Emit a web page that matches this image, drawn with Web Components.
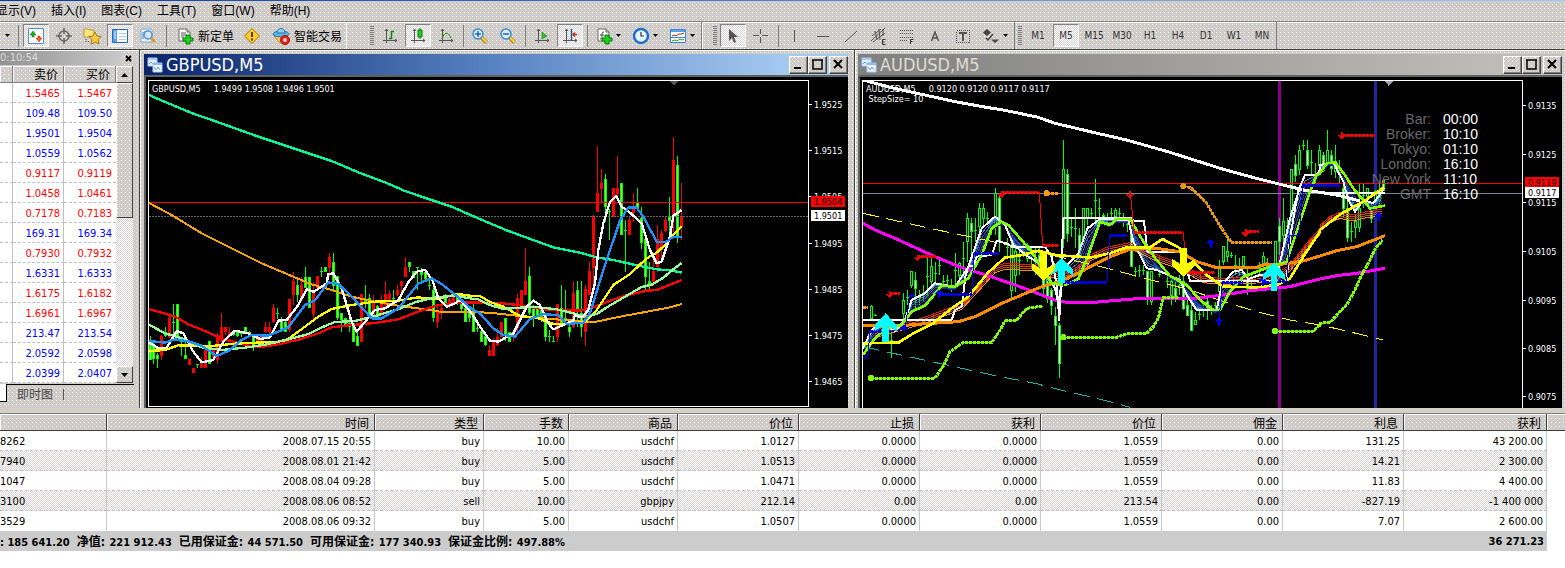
<!DOCTYPE html>
<html lang="zh-CN">
<head>
<meta charset="utf-8">
<title>交易终端</title>
<style>
  html, body { margin: 0; background: #fff; }
  body {
    --face: #d2cec8;
    --ui: "DejaVu Sans Condensed", "Noto Sans", "Noto Sans CJK SC", sans-serif;
    --grain: url("data:image/svg+xml,%3Csvg xmlns='http://www.w3.org/2000/svg' width='4' height='4' shape-rendering='crispEdges'%3E%3Crect width='4' height='4' fill='%23cccccc'/%3E%3Crect width='1' height='1' fill='%23ffffcc'/%3E%3Crect x='2' y='2' width='1' height='1' fill='%23ffcccc'/%3E%3C/svg%3E");
    --check: url("data:image/svg+xml,%3Csvg xmlns='http://www.w3.org/2000/svg' width='2' height='2' shape-rendering='crispEdges'%3E%3Crect width='1' height='1' fill='%23d8d4d4'/%3E%3Crect x='1' y='1' width='1' height='1' fill='%23d8d4d4'/%3E%3C/svg%3E");
    font: 11px/14px var(--ui);
    color: #000;
    overflow-x: hidden;
  }
</style>
</head>
<body>
<trade-terminal></trade-terminal>

<template id="terminal">
  <style>
    :host { display: block; background: var(--face) var(--grain); overflow: hidden; }
    .strip { height: 1px; background: linear-gradient(90deg, #0a3a9a, #5580c8 50%, #a6caf0); }
    .bars { display: flex; height: 27px; border-top: 1px solid #808080; border-bottom: 1px solid #404040; box-shadow: inset 0 1px #fff; }
    main { display: flex; padding-bottom: 5px; border-bottom: 1px solid #808080; box-shadow: inset 0 -5px #d4d0c8, inset 0 1px #fff; }
    .spacer { width: 20px; border-left: 1px solid #fff; }
    .gap { width: 7px; border-left: 1px solid #fff; }
  </style>
  <div class="strip"></div>
  <menu-bar></menu-bar>
  <div class="bars">
    <tool-group first>
      <tool-button kind="caret" label="窗口列表"></tool-button><tool-sep wide></tool-sep>
      <tool-button pressed icon="quotes" label="市场报价"></tool-button>
      <tool-button icon="target" label="数据窗口"></tool-button>
      <tool-button icon="nav" label="导航"></tool-button>
      <tool-button pressed icon="term" label="终端"></tool-button>
      <tool-button icon="test" label="策略测试"></tool-button>
      <tool-sep wide></tool-sep>
      <tool-button kind="text" icon="order">新定单</tool-button>
      <tool-button icon="warn" label="编辑器"></tool-button>
      <tool-button kind="text" icon="expert">智能交易</tool-button>
    </tool-group>
    <div class="spacer"></div>
    <tool-group>
      <tool-button icon="bars" label="柱状图"></tool-button>
      <tool-button pressed icon="candle" label="蜡烛图"></tool-button>
      <tool-button icon="line" label="折线图"></tool-button>
      <tool-sep></tool-sep>
      <tool-button icon="zoomin" label="放大"></tool-button>
      <tool-button icon="zoomout" label="缩小"></tool-button>
      <tool-sep></tool-sep>
      <tool-button icon="scroll" label="自动滚动"></tool-button>
      <tool-button pressed icon="shift" label="图表平移"></tool-button>
      <tool-sep></tool-sep>
      <tool-button kind="drop" icon="docplus" label="技术指标"></tool-button>
      <tool-button kind="drop" icon="clock" label="时段"></tool-button>
      <tool-button kind="drop" icon="tmpl" label="模板"></tool-button>
    </tool-group>
    <div class="gap"></div>
    <tool-group>
      <tool-button pressed icon="cursor" label="光标"></tool-button>
      <tool-button icon="cross" label="十字准线"></tool-button>
      <tool-sep></tool-sep>
      <tool-button icon="vline" label="垂直线"></tool-button>
      <tool-button icon="hline" label="水平线"></tool-button>
      <tool-button icon="trend" label="趋势线"></tool-button>
      <tool-button icon="chan" label="等距通道"></tool-button>
      <tool-button icon="fibo" label="斐波纳契"></tool-button>
      <tool-button icon="text" label="文字"></tool-button>
      <tool-button icon="label" label="文字标签"></tool-button>
      <tool-button kind="drop" icon="arrows" label="箭头"></tool-button>
    </tool-group>
    <tool-group>
      <tool-button kind="period">M1</tool-button><tool-button kind="period" pressed>M5</tool-button><tool-button kind="period">M15</tool-button><tool-button kind="period">M30</tool-button><tool-button kind="period">H1</tool-button><tool-button kind="period">H4</tool-button><tool-button kind="period">D1</tool-button><tool-button kind="period">W1</tool-button><tool-button kind="period">MN</tool-button>
    </tool-group>
  </div>
  <main>
    <market-watch></market-watch>
    <chart-window caption="GBPUSD,M5" active><gbp-chart></gbp-chart></chart-window>
    <chart-window caption="AUDUSD,M5"><aud-chart></aud-chart></chart-window>
  </main>
  <trade-table></trade-table>
</template>

<template id="menu">
  <style>
    :host { display: block; height: 20px; }
    nav { display: flex; gap: 15px; margin-left: -4px; }
    a { color: #000; text-decoration: none; font: 12px/20px "Liberation Sans", "Noto Sans CJK SC", sans-serif; white-space: nowrap; }
  </style>
  <nav><a href="#view">显示(V)</a><a href="#insert">插入(I)</a><a href="#charts">图表(C)</a><a href="#tools">工具(T)</a><a href="#window">窗口(W)</a><a href="#help">帮助(H)</a></nav>
</template>

<template id="group">
  <style>
    :host { display: flex; align-items: center; height: 27px; border-right: 1px solid #808080; }
    .grip { width: 4px; height: 20px; margin: 0 2px 0 3px; background: repeating-linear-gradient(#808080 0 1px, transparent 1px 2px); }
    :host([first]) { border: 0; }
    :host([first]) .grip { display: none; }
  </style>
  <div class="grip"></div><slot></slot>
</template>

<template id="button">
  <style>
    :host { display: block; width: 28px; flex: none; }
    :host([kind="caret"]) { width: 14px; }
    :host([kind="text"]) { width: auto; }
    :host([kind="drop"]) { width: 37px; }
    button { display: flex; align-items: center; justify-content: center; box-sizing: border-box; width: 26px; height: 23px; margin: 0 1px; padding: 0; border: 1px solid transparent; background: none; color: #333; font: 11px/14px var(--ui); white-space: nowrap; }
    :host([kind="caret"]) button { width: 12px; }
    :host([kind="period"]) button { font-size: 10px; }
    :host([kind="text"]) button { width: auto; margin: 0; padding: 0 3px 0 6px; gap: 5px; color: #000; font: 12px/14px "Noto Sans CJK SC", sans-serif; }
    :host([kind="drop"]) button { width: 35px; gap: 4px; justify-content: flex-start; padding-left: 4px; }
    :host([pressed]) button { border-color: #808080 #fff #fff #808080; background: #fff var(--check); }
    svg { display: block; flex: none; overflow: visible; }
  </style>
  <button type="button"><slot></slot></button>
</template>

<template id="sep">
  <style>
    :host { display: block; flex: none; box-sizing: border-box; width: 6px; height: 22px; border-left: 3px solid transparent; background: linear-gradient(90deg, #808080 1px, transparent 1px) no-repeat padding-box; }
    :host([wide]) { width: 8px; border-left-width: 4px; }
  </style>
</template>

<template id="market">
  <style>
    :host { display: block; width: 139px; flex: none; }
    .title { display: flex; justify-content: space-between; align-items: center; height: 16px; padding-right: 6px; font-size: 11px; line-height: 14px; color: #ddd; }
    .title span { flex: 1; background: linear-gradient(90deg, #929292, #b8b8b8 70%, #c8c8c8); margin-right: 2px; }
    .title button { width: 10px; height: 12px; padding: 0; border: 0; background: none; display: grid; place-items: center; }
    .body { display: flex; width: 133px; }
    table { width: 116px; table-layout: fixed; border-collapse: separate; border-spacing: 0; background: #fff; }
    td, th { box-sizing: border-box; padding: 2px 3px 0 0; height: 20px; text-align: right; font-weight: normal; border-right: 1px solid #c0c0c0; border-bottom: 1px dashed #c0c0c0; white-space: nowrap; font-size: 11px; line-height: 14px; }
    td:last-child { border-right: 0; padding-right: 4px; }
    th { height: 17px; padding: 0 5px 0 0; font: 12px/14px "Noto Sans CJK SC", sans-serif; background: var(--face) var(--grain); border-bottom: 1px solid #808080; border-right: 1px solid #808080; box-shadow: inset 1px 1px #fff; }
    .down { color: #f00; } .up { color: #00f; }
    .scroll { width: 17px; display: flex; flex-direction: column; background: #fff var(--check); }
    .scroll button, .thumb { box-sizing: border-box; width: 17px; height: 17px; padding: 0; display: grid; place-items: center; background: var(--face) var(--grain); border: 1px solid; border-color: #fff #404040 #404040 #fff; }
    .thumb { height: 135px; } .rest { flex: 1; }
    .tabs { display: flex; height: 17px; margin-top: 1px; border-top: 1px solid #000; font: 12px/17px "Noto Sans CJK SC", sans-serif; width: 134px; }
    .tabs i { width: 6px; background: #fff; border: 1px solid #000; border-width: 0 1px 1px 0; margin-top: -1px; }
    .tabs a { color: #444; text-decoration: none; padding: 0 10px; }
    .tabs b { width: 1px; margin: 4px 0 2px; background: #555; }
  </style>
  <div class="title"><span>0:10:54</span><button type="button" aria-label="关闭"><svg width="7" height="7"><path d="M1 1l5 5M6 1l-5 5" stroke="#000" stroke-width="2"/></svg></button></div>
  <div class="body">
    <table><colgroup><col style="width:13px"><col style="width:51px"><col></colgroup><thead><tr><th></th><th>卖价</th><th>买价</th></tr></thead><tbody></tbody></table>
    <div class="scroll"><button type="button" aria-label="向上"><svg width="7" height="4"><path d="M0 4h7L3.500 0z"/></svg></button><div class="thumb"></div><div class="rest"></div><button type="button" aria-label="向下"><svg width="7" height="4"><path d="M0 0h7L3.500 4z"/></svg></button></div>
  </div>
  <div class="tabs"><i></i><a href="#tick">即时图</a><b></b></div>
</template>

<template id="window">
  <style>
    :host { display: block; flex: 1 1 0; min-width: 0; padding: 4px 3px 0; border-left: 1px solid #404040; box-shadow: inset 1px 1px #fff; }
    :host([active]) { padding: 4px 6px 0 4px; }
    header { display: flex; align-items: center; height: 21px; color: #e0dcd4; background: linear-gradient(90deg, #808080, #c4c2be); }
    :host([active]) header { color: #fff; background: linear-gradient(90deg, #0a246a, #5580c0 48%, #a6caf0 92%); }
    header > svg { margin: 0 3px 0 3px; flex: none; }
    h2 { flex: 1; margin: 0; font: 18px/21px var(--ui); white-space: nowrap; }
    button { box-sizing: border-box; width: 19px; height: 18px; padding: 0; display: grid; place-items: center; background: var(--face) var(--grain); border: 1px solid; border-color: #fff #404040 #404040 #fff; box-shadow: inset -1px -1px #808080; }
    button:last-child { margin-left: 2px; }
    .view { border: 2px solid #606060; border-width: 2px 0 0 2px; background: #000; padding: 3px 0 0 2px; }
  </style>
  <header>
    <svg width="16" height="16" viewBox="0 0 16 16"><path d="M1 1h9v8H1z" fill="#e4efff" stroke="#a8ccf8"/><path d="M1 1h9v2H1z" fill="#a8ccf8"/><path d="M2 7l2-2 2 2 2-2" stroke="#6a9ce4" fill="none"/><path d="M6 6h9v9H6z" fill="#f2f8ff" stroke="#a8ccf8"/><path d="M6 6h9v2H6z" fill="#8fbcf4"/><path d="M7 10l2 3 2-3 2 3" stroke="#6a9ce4" fill="none"/></svg>
    <h2></h2>
    <button type="button" aria-label="最小化"><svg width="11" height="11"><path d="M1 8h7v2H1z"/></svg></button><button type="button" aria-label="最大化"><svg width="11" height="11"><path d="M1 1h9v9H1zM0 1h11" fill="none" stroke="#000" stroke-width="1.500"/></svg></button><button type="button" aria-label="关闭"><svg width="11" height="11"><path d="M1 1l8 8M9 1l-8 8" stroke="#000" stroke-width="2"/></svg></button>
  </header>
  <div class="view"><slot></slot></div>
</template>

<template id="chart">
  <style>
    :host { display: block; font-size: 9px; line-height: 10px; color: #fff; }
    .row { display: flex; padding-bottom: 1px; }
    :host([open]) .row { padding: 0; }
    .plot { position: relative; flex: 1; min-width: 0; height: 325px; border: 1px solid #fff; }
    :host([open]) .plot { height: 327px; border-bottom: 0; }
    svg { display: block; }
    .plot > svg { width: 100%; height: 100%; }
    .axis { width: 39px; flex: none; }
    .axis text { font: 9px var(--ui); fill: #fff; }
    .info { position: absolute; left: 3px; top: 3px; white-space: pre; }
    .info b { font-weight: normal; margin-right: 13px; }
    .clock { position: absolute; right: 45px; top: 31px; display: grid; grid-template-columns: auto 34px; column-gap: 12px; font: 14px/15px "Liberation Sans", sans-serif; text-align: right; }
    .clock span:nth-child(odd) { color: #696969; }
  </style>
  <div class="row"><div class="plot"></div><svg class="axis"></svg></div>
</template>

<template id="trades">
  <style>
    :host { display: block; background: #fff; padding-bottom: 17px; }
    table { width: 100%; table-layout: fixed; border-collapse: separate; border-spacing: 0; }
    td, th { box-sizing: border-box; height: 20px; padding: 2px 3px 0 0; text-align: right; font-weight: normal; font-size: 11px; line-height: 14px; border-right: 1px solid #c8c8c8; border-bottom: 1px dashed #c0c0c0; white-space: nowrap; overflow: hidden; }
    td:first-child { text-align: left; }
    th { height: 17px; padding: 0 5px 0 0; font: 12px/15px "Noto Sans CJK SC", sans-serif; background: var(--face) var(--grain); border-right: 1px solid #404040; border-bottom: 1px solid #404040; box-shadow: inset 1px 1px #fff; }
    th:last-child { border-right: 0; }
    td:last-child { border: 0; background: #fff; }
    tbody tr:nth-child(even) { background: var(--check); }
    tbody tr:last-child td { border-bottom: 0; }
    tfoot td { border: 0; background: #ccc; font-weight: bold; white-space: pre; }
    tfoot td:last-child { background: #fff; }
    tfoot span { font-size: 12px; margin: 0 1px 0 7px; }
  </style>
  <table>
    <colgroup><col style="width:107px"><col><col style="width:109px"><col style="width:85px"><col style="width:109px"><col style="width:121px"><col style="width:121px"><col style="width:121px"><col style="width:121px"><col style="width:121px"><col style="width:121px"><col style="width:143px"><col style="width:18px"></colgroup>
    <thead><tr><th></th><th>时间</th><th>类型</th><th>手数</th><th>商品</th><th>价位</th><th>止损</th><th>获利</th><th>价位</th><th>佣金</th><th>利息</th><th>获利</th><th></th></tr></thead>
    <tbody></tbody>
    <tfoot><tr><td colspan="11">: 185 641.20<span>净值:</span> 221 912.43<span>已用保证金:</span> 44 571.50<span>可用保证金:</span> 177 340.93<span>保证金比例:</span> 497.88%</td><td>36 271.23</td><td></td></tr></tfoot>
  </table>
</template>

<script>
const stamp = (host, id) => {
  const root = host.attachShadow({ mode: 'open' });
  root.append(document.getElementById(id).content.cloneNode(true));
  return root;
};
const simple = (name, id) => customElements.define(name, class extends HTMLElement {
  constructor() { super(); stamp(this, id); }
});

/* ---- toolbar icons, all on a 16 x 16 grid ---- */
const axes = '<path d="M4.500 1v14M1 12.500h14M3 3l1.500-2L6 3M13 11l2 1.500-2 1.500" fill="none" stroke="#555"/>';
const lens = s => `<path d="M9.500 9.500l5 5" stroke="#b88a20" stroke-width="4"/><path d="M9.500 9l5 5" stroke="#ffd54a" stroke-width="2"/><circle cx="6" cy="6" r="5" fill="#d8f0ff" stroke="#3f86d0" stroke-width="1.500"/>${s}`;
const sheet = '<path d="M2 1h8l3 3v9H2z" fill="#fff" stroke="#666"/><path d="M10 1v3h3" fill="#ccc" stroke="#666"/>';
const plus = '<path d="M9 7h4v3h3v3h-3v3H9v-3H6v-3h3z" fill="#1fd01f" stroke="#087a08"/>';
const ICONS = {
  quotes: '<path d="M0.500 0.500h15v15H.5z" fill="#fff" stroke="#4a90e0"/><path d="M5 3l3 4H6v2H4V7H2z" fill="#18b018" stroke="#0a700a" stroke-width=".5"/><path d="M11 14L8 10h2V8h2v2h2z" fill="#f06030" stroke="#b02000" stroke-width=".5"/>',
  target: '<circle cx="8" cy="8" r="5" fill="none" stroke="#666" stroke-width="1.500"/><path d="M8 0v6M8 10v6M0 8h6M10 8h6" stroke="#666" stroke-width="1.500"/>',
  nav: '<path d="M0 1h4l1 1h5v7H0z" fill="#ffe680" stroke="#c89a28"/><path d="M2 11v1M2 13v1M4 13.500h1" stroke="#444"/><path d="M11 4l2 4 4 .5-3 3 1 4.500-4-2-4 2 1-4.500-3-3 4-.5z" fill="#ffcf3a" stroke="#a87412"/>',
  term: '<path d="M.5 1.500h15v13H.5z" fill="#fff" stroke="#2468b8"/><path d="M1 2h4v12H1z" fill="#5aa0e8"/><path d="M2 4h2M2 6h2M2 8h2M2 10h2" stroke="#d8ecff"/><path d="M7 5.500h7M7 8.500h7M7 11.500h7" stroke="#b0c8e8"/>',
  test: '<path d="M1 1h11v13H1z" fill="#e8f2fc" stroke="#8aa8c8"/><path d="M3 4v7M5 3v5M7 6v5" stroke="#4080c0"/><path d="M11 10l4 4" stroke="#d8a030" stroke-width="3"/><circle cx="8" cy="7" r="4" fill="#cfe8ff" fill-opacity=".8" stroke="#4f8fd0" stroke-width="1.500"/>',
  order: sheet + '<path d="M4 5h5M4 7h6M4 9h3" stroke="#555"/>' + plus,
  warn: '<path d="M8 .5L15.500 8 8 15.500.5 8z" fill="#ffcc28" stroke="#a87800"/><path d="M8 4v5M8 10.500v2" stroke="#553c00" stroke-width="2"/>',
  expert: '<path d="M1 8l6 7h5l3-6z" fill="#f8d060" stroke="#c08820"/><ellipse cx="8" cy="6" rx="8" ry="3" fill="#5fb4e8" stroke="#2878b0"/><path d="M4 5c0-6 8-6 8 0z" fill="#8fd0f4" stroke="#2878b0"/><circle cx="12" cy="12" r="4.500" fill="#e02818" stroke="#a01008"/><path d="M10.500 10.500h3v3h-3z" fill="#fff"/>',
  bars: axes + '<path d="M7 10.500h2.500V3.500H12" fill="none" stroke="#0a8a0a" stroke-width="1.500"/>',
  candle: axes + '<path d="M10 0v11" stroke="#087a08"/><path d="M8 2h4v7H8z" fill="#20d020" stroke="#087a08"/>',
  line: axes + '<path d="M4 11c2-7 6-8 9-1" fill="none" stroke="#0a9a0a"/>',
  zoomin: lens('<path d="M3 6h6M6 3v6" stroke="#2060b0" stroke-width="1.500"/>'),
  zoomout: lens('<path d="M3 6h6" stroke="#2060b0" stroke-width="1.500"/>'),
  scroll: axes + '<path d="M8 4l5 4-5 3z" fill="#30c030" stroke="#087a08" stroke-width=".5"/>',
  shift: axes + '<path d="M9.500 1v11" stroke="#1060b0" stroke-width="1.500"/><path d="M15 6.500h-4M13 4.500l-2 2 2 2" fill="none" stroke="#c03818" stroke-width="1.500"/>',
  docplus: sheet + '<path d="M8 4c-2 0-2 1-2 3s0 4-2 4M4 7h4" fill="none" stroke="#444"/>' + plus,
  clock: '<circle cx="8" cy="8" r="7" fill="#e8f4ff" stroke="#1e6fd0" stroke-width="2.500"/><path d="M8 4v4h3" fill="none" stroke="#333" stroke-width="1.200"/>',
  tmpl: '<path d="M.5 1.500h15v13H.5z" fill="#fff" stroke="#3f86d8"/><path d="M1 2h14v2H1z" fill="#5aa0e8"/><path d="M2 8l2-1 2 1 3-2 2 0 3-1" fill="none" stroke="#b02818"/><path d="M1 9.500h14" stroke="#3f86d8"/><path d="M2 13l3-1 2 1 3-2 2 1 2-1" fill="none" stroke="#18a018"/>',
  cursor: '<path d="M4 1v12l3-3 2 5 2-1-2-5h4z" fill="#555"/>',
  cross: '<path d="M7.500 1v5M7.500 9v6M0 7.500h6M9 7.500h6" stroke="#555"/>',
  vline: '<path d="M7.500 2v12" stroke="#555"/>',
  hline: '<path d="M2 8.500h12" stroke="#555"/>',
  trend: '<path d="M2 14L14 3" stroke="#555"/>',
  chan: '<path d="M0 13L14 0M1 8l9-7M2 14L14 5M4 3l2 9M8 1l1 11M12 1l0 7" stroke="#555"/><path d="M14.500 11.500h-3v5h3M11.500 14h2" fill="none" stroke="#333"/>',
  fibo: '<path d="M1 2.500h14M1 5.500h14M1 9.500h14M1 12.500h8" stroke="#555" stroke-dasharray="1 1"/><path d="M11.500 16v-4.500h3M11.500 13.500h2" fill="none" stroke="#333"/>',
  text: '<path d="M4.500 13L8 4l3.500 9M5.500 10h5" fill="none" stroke="#555" stroke-width="1.500"/>',
  label: '<path d="M1.500 2.500h13v12h-13z" fill="none" stroke="#555" stroke-dasharray="1 1" shape-rendering="crispEdges"/><path d="M4 5h8M8 5v8" stroke="#555" stroke-width="2"/>',
  arrows: '<path d="M4 1l4 3.500-4 3.500L0 4.500zM12 15l-4-3.500h8z" fill="#444"/><path d="M3 10l2 2 5-6" fill="none" stroke="#444" stroke-width="1.500"/>'
};
const caret = '<svg width="5" height="3"><path d="M0 0h5L2.500 3z"/></svg>';

customElements.define('tool-button', class extends HTMLElement {
  constructor() { super(); stamp(this, 'button'); }
  connectedCallback() {
    const b = this.shadowRoot.querySelector('button');
    const icon = this.getAttribute('icon'), kind = this.getAttribute('kind');
    if (this.hasAttribute('label')) b.setAttribute('aria-label', this.getAttribute('label'));
    if (icon) b.insertAdjacentHTML('afterbegin', `<svg width="16" height="16" viewBox="0 0 16 16">${ICONS[icon]}</svg>`);
    if (kind === 'caret' || kind === 'drop') b.insertAdjacentHTML('beforeend', caret);
  }
});
simple('tool-sep', 'sep');
simple('tool-group', 'group');
simple('menu-bar', 'menu');

customElements.define('market-watch', class extends HTMLElement {
  constructor() {
    super();
    const quotes = 'd 1.5465 1.5467|u 109.48 109.50|u 1.9501 1.9504|u 1.0559 1.0562|d 0.9117 0.9119|d 1.0458 1.0461|d 0.7178 0.7183|u 169.31 169.34|d 0.7930 0.7932|u 1.6331 1.6333|d 1.6175 1.6182|d 1.6961 1.6967|u 213.47 213.54|u 2.0592 2.0598|u 2.0399 2.0407';
    stamp(this, 'market').querySelector('tbody').innerHTML = quotes.split('|').map(q => {
      const [dir, bid, ask] = q.split(' ');
      return `<tr class="${dir === 'u' ? 'up' : 'down'}"><td></td><td>${bid}</td><td>${ask}</td></tr>`;
    }).join('');
  }
});

customElements.define('chart-window', class extends HTMLElement {
  constructor() { super(); stamp(this, 'window'); }
  connectedCallback() { this.shadowRoot.querySelector('h2').textContent = this.getAttribute('caption'); }
});

customElements.define('trade-table', class extends HTMLElement {
  constructor() {
    super();
    const rows = [
      '8262|2008.07.15 20:55|buy|10.00|usdchf|1.0127|0.0000|0.0000|1.0559|0.00|131.25|43 200.00',
      '7940|2008.08.01 21:42|buy|5.00|usdchf|1.0513|0.0000|0.0000|1.0559|0.00|14.21|2 300.00',
      '1047|2008.08.04 09:28|buy|5.00|usdchf|1.0471|0.0000|0.0000|1.0559|0.00|11.83|4 400.00',
      '3100|2008.08.06 08:52|sell|10.00|gbpjpy|212.14|0.00|0.00|213.54|0.00|-827.19|-1 400 000',
      '3529|2008.08.06 09:32|buy|5.00|usdchf|1.0507|0.0000|0.0000|1.0559|0.00|7.07|2 600.00'];
    stamp(this, 'trades').querySelector('tbody').innerHTML =
      rows.map(r => '<tr>' + r.split('|').map(c => `<td>${c}</td>`).join('') + '<td></td></tr>').join('');
  }
});

/* ---- charts: three drawing units to one screen pixel ---- */
const parse = s => s.trim().split(/\s+/).map(p => p.split(',').map(Number));
/* joins sections of a series, each given in the coordinates of its own section */
const join = (offs, parts) => parts.flatMap((s, i) => s ? parse(s).map(([x, y]) => [x + offs[i][0], y + offs[i][1]]) : []);
const poly = (pts, color, w = 7, extra = '') => `<polyline points="${pts.join(' ')}" fill="none" stroke="${color}" stroke-width="${w}" stroke-linejoin="round" ${extra}/>`;
const at = (pts, x) => {
  for (let i = 1; i < pts.length; i++) if (x <= pts[i][0]) {
    const [a, b] = pts[i - 1], [c, d] = pts[i];
    return c === a ? d : b + (d - b) * (x - a) / (c - a);
  }
  return pts[pts.length - 1][1];
};

class PriceChart extends HTMLElement {
  constructor() {
    super();
    const root = stamp(this, 'chart');
    root.querySelector('.plot').innerHTML =
      `<svg viewBox="${this.box}" preserveAspectRatio="none" shape-rendering="crispEdges">${this.draw()}</svg>${this.overlay}`;
    const axis = root.querySelector('.axis');
    axis.setAttribute('height', 327);
    axis.setAttribute('shape-rendering', 'crispEdges');
    axis.innerHTML = this.marks.map(([t, y]) => `<path d="M0 ${y}h3" stroke="#fff"/><text x="5" y="${y + 3}">${t}</text>`).join('')
      + this.tags.map(([t, y, bg, ink]) => `<rect x="2" y="${y}" width="34" height="11" fill="${bg}"/><text x="5" y="${y + 9}" style="fill:${ink}">${t}</text>`).join('');
  }
}

customElements.define('gbp-chart', class extends PriceChart {
  get box() { return '12 18 1977 975'; }
  get overlay() { return '<div class="info"><b>GBPUSD,M5</b>1.9499 1.9508 1.9496 1.9501</div>'; }
  get marks() { return [['1.9525', 24.5], ['1.9515', 70.5], ['1.9505', 116.5], ['1.9495', 163.5], ['1.9485', 209.5], ['1.9475', 255.5], ['1.9465', 301.5]]; }
  get tags() { return [['1.9504', 116, '#f00', '#000'], ['1.9501', 130, '#fff', '#000']]; }
  draw() {
    const o = [[0, 0], [975, -75]], L = (a, b, c, w) => poly(join(o, [a, b]), c, w);
    const bars = [
      `15g782-855-795-855 26g800-868-810-852 38g835-880-840-853 50r780-855-783-843 62g755-785-770-783 74r715-790-728-785 86g688-780-740-743 98g688-790-688-787 110g785-842-790-800 122g795-853-840-853 134r852-870-852-870 146r879-895-879-895 158g868-880-868-871 170r845-880-865-880 182r820-880-825-880 194g798-868-798-868 206r820-855-825-845 218r775-868-780-855 230r715-800-757-797 242r757-780-757-770 254r757-783-770-780 266g770-783-775-780 278g770-785-772-782 290g768-785-772-778 302g757-770-757-770 314g768-785-770-780 326g780-828-782-815 338r780-800-784-798 350r780-800-784-798 362r742-770-757-770 374r742-780-757-770 386r688-745-700-742 398g700-732-714-717 410g725-770-732-765 422g735-770-740-770 434r672-772-672-765 446r590-690-618-660 458g605-680-630-660 470r605-680-630-675 482g577-640-605-640 494g605-700-605-700 506r620-740-645-717 518r603-640-603-640 530g577-605-588-592 542g577-592-577-590 554r535-605-547-580 566g535-645-562-632 578g603-735-603-730 590g714-770-715-735 602g730-757-730-757 614g725-770-745-757 626g745-800-745-800 638g765-812-782-812 650r657-800-657-800 662g630-700-675-680 674g657-725-670-720 686r660-725-685-725 698g690-730-692-728 710r660-720-685-715 722r618-700-657-690 734r645-680-657-672 746g645-685-668-672 758r630-662-645-660 770r618-655-618-632 782r545-605-577-605 794g560-590-562-577 806g588-608-588-608 818g577-645-577-580 830g580-620-588-600 842g588-615-590-612 854g605-645-630-633 866g618-742-645-730 878r690-758-710-742 890r680-732-700-714 902g657-690-660-685 914r660-700-672-685 926r660-685-665-680 938g655-690-660-685 950g685-712-688-702 962g685-742-700-742 974g700-742-715-730 986g688-770-710-770`,
      `22g820-845-833-836 34g843-876-843-876 46g855-888-858-886 58r885-917-900-917 70r865-917-875-917 82r835-888-860-885 94r815-860-815-860 106g803-873-803-855 118g845-875-845-875 130r840-875-848-860 142r732-850-745-835 154r720-765-720-765 166r593-735-693-735 178g650-795-678-790 190g765-832-770-800 202g770-795-773-795 214g778-815-780-800 226g790-873-795-860 238g840-875-857-862 250g858-876-872-875 262r762-875-762-860 274g705-820-773-820 286g720-822-805-810 298g815-860-832-847 310r693-835-730-832 322g693-830-720-778 334g693-860-790-832 346r705-887-717-845 358r635-735-662-735 370r495-725-497-655 382r288-485-430-485 394r357-455-400-418 406g372-515-387-470 418g478-570-483-487 430r413-500-413-500 442r318-445-413-432 454g398-555-398-555 466g510-665-540-543 478r500-555-510-555 490r430-515-470-490 502g415-480-455-475 514g470-597-505-580 526g565-720-567-680 538g635-720-693-705 550r630-707-662-695 562r525-665-567-652 574r540-630-550-600 586r500-545-510-543 598g440-550-497-513 610r262-545-330-500 622g318-580-345-560 634r400-570-497-530`];
    const candles = bars.map((s, k) => s.split(' ').map(b => {
      const [, x, col, rest] = b.match(/^(\d+)([rg])(.*)$/), [h, l, t, m] = rest.split('-').map(n => +n + o[k][1]);
      const X = +x + o[k][0], c = col === 'r' ? '#f00' : '#0f0';
      return `<path d="M${X} ${h}V${l}" stroke="${c}" stroke-width="3"/><rect x="${X - 4}" y="${t}" width="9" height="${Math.max(3, m - t)}" fill="${c}"/>` + (col === 'g' && m - t > 12 ? `<rect x="${X - 1}" y="${t + 3}" width="3" height="${m - t - 6}" fill="#7fff30"/>` : '');
    }).join('')).join('');
    return candles
      + '<path d="M12 424.500H1989" stroke="#6a6a5a" stroke-width="3" stroke-dasharray="6 3"/><rect x="12" y="381" width="1977" height="3" fill="#f00"/>'
      + L('12,60 70,85 150,118 200,135 340,185 430,215 490,235 560,258 640,292 720,322 780,348 850,372 920,395', '15,501 60,520 110,541 170,563 250,592 330,608 380,622 430,630 500,646 560,658 600,661 635,668', '#00fa9a')
      + L('12,384 80,420 170,475 260,520 350,565 440,603 500,628 560,645 620,665 690,680 760,692 860,706 890,711 960,711', '60,788 140,797 200,804 300,811 370,817 440,802 520,787 600,772 635,762', '#ffa500', 6)
      + L('12,702 90,725 130,748 180,768 220,787 260,799 310,812 340,817 400,808 460,794 520,775 560,757 600,752 690,744 760,733 830,706 880,690 940,682', '5,757 100,760 150,766 230,779 330,782 370,772 420,752 470,736 530,722 560,720 600,704 635,690', '#f00')
      + L('12,828 60,825 100,811 200,813 270,806 400,800 430,792 480,755 520,725 560,702 620,690 690,680 760,677 820,667 870,673 940,657', '5,738 30,738 60,756 100,770 150,798 200,803 250,822 300,822 345,815 380,780 430,705 480,672 530,625 560,608 590,580 610,555 635,530', '#ff0')
      + L('12,749 60,775 110,790 170,817 230,825 300,818 360,809 420,796 490,777 540,753 570,741 630,738 700,720 760,703 810,682 870,667 930,662', '5,746 25,748 60,765 100,777 190,770 260,778 310,790 340,800 380,792 420,766 460,743 515,711 545,704 580,683 610,658 635,639', '#98fb98')
      + L('12,802 40,820 65,818 95,768 115,775 145,830 170,862 205,855 235,800 270,767 310,775 345,792 375,787 400,737 425,735 460,690 485,642 505,651 545,625 550,597 565,595 590,640 620,740 635,770 690,705 720,700 760,675 790,622 815,590 840,585 862,615 880,670 905,695 930,685 945,675', '5,790 30,830 60,872 85,875 130,850 170,770 190,752 210,765 235,820 250,838 310,812 315,795 335,803 355,780 375,700 385,600 400,520 420,455 438,437 455,470 480,488 515,520 540,600 560,640 575,635 600,560 610,497 635,480', '#fff')
      + L('12,798 60,803 90,793 130,799 170,812 215,843 250,828 290,795 320,780 370,782 430,757 480,690 510,676 550,622 580,627 620,665 680,730 710,730 760,700 820,626 860,610 890,627 940,667', '5,777 30,790 70,835 100,855 135,860 180,807 220,792 265,796 290,822 340,818 360,790 400,660 450,512 475,472 500,473 520,500 560,575 590,575 610,560 635,560', '#1e90ff')
      + '<path d="M1574 18h27l-13 14z" fill="#555"/>';
  }
});

customElements.define('aud-chart', class extends PriceChart {
  connectedCallback() { this.setAttribute('open', ''); }
  get box() { return '24 18 1977 981'; }
  get overlay() {
    const t = ['Bar:', '00:00', 'Broker:', '10:10', 'Tokyo:', '01:10', 'London:', '16:10', 'New York', '11:10', 'GMT', '16:10'];
    return `<div class="info"><b>AUDUSD,M5</b>0.9120 0.9120 0.9117 0.9117\n StepSize= 10</div><div class="clock">${t.map(s => `<span>${s}</span>`).join('')}</div>`;
  }
  get marks() { return [['0.9135', 25.5], ['0.9125', 74.5], ['0.9115', 122.5], ['0.9105', 171.5], ['0.9095', 220.5], ['0.9085', 268.5], ['0.9075', 316.5]]; }
  get tags() { return [['0.9119', 97, '#f00', '#000'], ['0.9117', 107, '#fff', '#000']]; }
  draw() {
    const o = [[0, 0], [705, 0], [1395, 0]], J = (...p) => join(o, p);
    /* x, kind (h hollow, w white body, t thin), high, low, body top, body bottom */
    const bars = [
      '50h690-735-693-730 62t718-724 110t740-850 146h655-735-675-715 158t645-690 170h588-640-588-630 182w590-700-617-640 194t645-690 206t630-680 218t550-660 230h535-630-575-620 242t560-630 254t545-600 266t600-640 278t600-630 290t612-650 302t535-640 314h560-620-565-600 326t500-600 338h415-560-430-500 350w430-560-445-470 362t430-500 374h385-470-400-455 386h385-460-400-430 398t410-450 410t430-480 421h340-480-355-450 433w355-530-370-500 458t490-545 470h505-670-515-645 482h520-650-530-600 494t515-600 506t500-545 518h505-560-510-550 530t515-580 542t515-600 554w520-600-540-590 566w575-665-580-640 578w590-685-610-670 590w640-720-645-690 602w695-810-725-750 613w745-910-750-865 625h195-520-282-490 637w282-500-298-475 649t430-485 661t400-520 673w460-545-480-530 685h400-500-400-490 697h400-450-400-430',
      '5t400-430 16t312-440 28t370-430 40w415-440-420-435 52t415-450 64t400-430 76h400-440-405-425 88t400-430 100t415-455 112t425-470 124w450-575-450-575 136t575-605 148t570-605 160t570-600 172w590-690-590-670 184h590-690-590-680 208t590-605 232t600-640 244h615-690-620-660 256w620-680-640-670 268t600-660 280w600-705-620-700 292w675-720-690-720 304w670-765-705-765 316h710-750-735-748 328t700-735 340t680-725 352w670-735-680-700 364t690-720 376t680-705 388h555-680-575-650 400h515-570-515-560 412h490-560-530-545 424t530-550 436t540-600 448t550-600 460h545-580-545-570 472w575-660-600-640 484t600-640 508t560-600 520h530-580-545-565 532t550-600 556h500-570-500-570 568w430-540-455-500 580h370-500-440-480 592t430-480 604h282-440-282-440 616w240-320-268-300 628h210-300-225-282 640t195-225 652w195-282-225-270 664t225-300 676t265-330 688h210-290-225-270 700w230-290-240-285 712h165-270-225-262',
      '10w230-290-240-270 22h165-265-225-262 34w225-300-240-280 46h210-310-260-290 58t255-330 70w330-430-340-400 82w370-500-400-487 94t440-500 106h420-490-440-457 118h325-470-400-457 130t325-400 142h340-380-340-365 154w400-445-400-430 166h345-400-350-380 178h320-390-350-375 190w312-345-315-345'];
    const candles = bars.map((s, k) => s.split(' ').map(b => {
      const [, x, kind, rest] = b.match(/^(\d+)([hwt])(.*)$/), [h, l, t, m] = rest.split('-').map(Number), X = +x + o[k][0];
      return `<path d="M${X} ${h}V${l}" stroke="#0f0" stroke-width="3"/>` + (kind === 't' ? `<path d="M${X - 4} ${(h + l) >> 1}h9" stroke="#0f0" stroke-width="3"/>` : `<rect x="${X - 3}" y="${t}" width="6" height="${m - t}" fill="${kind === 'w' ? '#fff' : '#000'}" stroke="#0f0" stroke-width="3"/>`);
    }).join('')).join('');
    const fast = J('24,820 50,765 75,745 120,768 150,735 170,675 210,655 240,625 300,635 340,575 380,460 420,425 450,450 475,510 520,545 560,570 600,640 613,700 625,580 670,535 690,480 700,455', '0,455 30,432 115,435 130,500 170,580 200,585 270,615 290,660 320,705 380,705 395,630 430,590 455,585 475,612 510,600 560,600 575,540 600,430 632,330 645,300 680,300 690,283', '0,270 40,262 70,320 85,375 105,410 130,375 160,385 190,345');
    const slow = J('24,840 60,790 90,760 140,750 170,710 210,692 260,632 300,635 340,610 380,540 410,460 440,440 460,450 530,530 560,580 590,625 630,630 670,612 700,540', '0,525 30,440 60,450 80,432 120,432 160,500 200,555 240,603 290,630 330,675 370,705 390,705 420,650 460,605 500,590 540,575 590,560 620,470 660,350 680,300', '0,295 20,265 45,262 75,300 100,340 150,400 195,392');
    const ribbon = ['#3f8fe8', '#2f6cc8', '#1a3a98', '#2450b8', '#14287c'].map((c, i) => {
      const pts = [];
      for (let x = 30; x < 1585; x += 10) pts.push([x, Math.round(at(fast, x) + (at(slow, x) + 10 - at(fast, x)) * (i + 1) / 6)]);
      return poly(pts, c, 3);
    }).join('');
    const warm = ['#e02000', '#ff3a10', '#b85010', '#ff8c20'].map((c, i) => poly(J('60,770 200,730 260,708 320,685 380,620 420,575 450,565 560,570 590,590 640,595 700,550', '0,540 50,517 120,503 200,540 270,565 340,605 400,610 500,606 560,596 600,570 650,505 690,460', '0,450 30,425 60,412 100,420 140,410 185,402').map(([x, y]) => [x, y + i * 6]), c, 3)).join('');
    const dots = (pts, c, big) => poly(pts, c, 3) + poly(pts, c, 9, 'stroke-dasharray="9 3"') + (big ? `<circle cx="${pts[0][0]}" cy="${pts[0][1]}" r="9" fill="${c}"/>` : '');
    const down = (x, y, s, c) => `<path d="M${x - s} ${y - s}l${s} ${s} ${s}-${s}M${x} ${y - 2 * s}v${2 * s}" fill="none" stroke="${c}" stroke-width="5"/>`;
    const up = (x, y, s, c) => `<path d="M${x - s} ${y + s}l${s}-${s} ${s} ${s}M${x} ${y + 2 * s}v${-2 * s}" fill="none" stroke="${c}" stroke-width="5"/>`;
    const bigUp = (x, y, h) => `<path d="M${x} ${y}l33 36v18l-23-16v${h - 38}h-20v${38 - h}l-23 16v-18z" fill="#0ff"/>`;
    const bigDown = (x, y) => `<path d="M${x} ${y}l35-34v-20l-25 16v-48h-20v48l-25-16v20z" fill="#ff0"/>`;
    const R = '#f00', B = '#0000f0', G = '#7fff00';
    return '<path d="M1273 18v981" stroke="#8a008a" stroke-width="9"/><path d="M1562 18v981" stroke="#2424a0" stroke-width="9"/>'
      + '<rect x="24" y="354" width="1977" height="3" fill="#778899"/>' + candles + ribbon + warm
      + '<rect x="24" y="324" width="1977" height="3" fill="#f00"/>'
      + poly(J('24,415 225,460 380,493 460,510', '40,577 165,610 300,645 410,683 520,715 600,735 690,750', '45,760 120,778 188,795'), '#ff0', 3, 'stroke-dasharray="48 24"')
      + poly(J('24,815 220,858 430,904 540,925 650,953', '0,965 60,980 120,997'), '#20b2aa', 3, 'stroke-dasharray="48 24"')
      + poly(J('24,15 110,38 200,58 300,80 400,98 450,106 550,127 600,145 690,166', '0,170 110,195 240,232 400,283 510,313 600,335 640,345', '0,352 60,362 120,378'), '#fff', 9)
      + poly(J('24,445 60,465 120,490 240,545 320,578 400,602 500,637 600,675 630,681 700,683', '0,683 140,671 300,672 400,660 480,647 600,635 650,622 690,612', '0,612 50,602 110,595 195,580'), '#f0f', 9)
      + poly(fast, '#fff', 6)
      + poly(J('24,735 290,735 300,705 320,695 332,600 340,575 355,572 365,545 410,540 425,498 455,505 470,515 570,515 590,545 605,630 613,735 625,430 700,430', '0,429 125,429 130,439 162,439 172,530 275,530 300,617 590,617 600,490 625,345 690,350', '0,352 60,354 195,354'), '#fff', 6)
      + poly(J('24,750 100,755 200,747 310,740 360,725 440,685 500,660 560,635 620,617 680,590', '0,575 60,545 120,523 200,520 270,530 320,560 380,578 500,577 530,567 560,570 640,558', '0,543 50,527 110,515 195,482'), '#ff8c00', 9)
      + poly(slow, G, 8)
      + poly(J('24,805 130,803 180,772 230,748 290,700 340,665 400,592 450,548 500,540 550,527 600,540 640,543 700,547', '0,548 60,535 110,517 180,517 218,492 270,520 283,590 310,560 350,600 400,635 500,637 560,630 600,610 640,545 690,470', '0,465 60,418 130,380 192,337'), '#ff0', 8)
      + dots(J('48,909 240,909 265,873 285,830 325,803 410,803 435,765 450,738 485,735 515,700 565,693'), G, 1)
      + dots(J('625,787 700,787', '80,787 110,777 170,775 190,755 205,730 220,668 268,668'), G, 1)
      + dots(J('', '555,768 670,768 690,750', '0,745 30,742 60,710 80,690 105,645 125,600 150,555 165,523 188,495'), G, 1)
      + dots(J('575,355 613,355'), '#ff9a10', 1) + dots(J('', '280,333 300,337 325,358 350,385 385,445 410,483 425,502 545,502'), '#e89810', 1) + dots(J('24,697 40,697'), '#ff9a10')
      + dots(J('440,352 553,352'), R) + poly(J('553,352 563,510'), R, 3) + dots(J('563,510 613,510'), R) + dots(J('185,545 245,545'), R) + dots(J('105,655 135,655'), R)
      + poly(J('', '122,365 133,473'), R, 3) + dots(J('', '133,473 280,473'), R) + poly(J('', '280,473 290,592'), R, 3) + dots(J('', '290,592 375,592'), R)
      + dots(J('', '465,468 508,468'), R) + dots(J('', '', '65,180 165,180'), R)
      + down(440, 365, 8, R) + down(188, 555, 8, R) + down(103, 665, 8, R) + down(825, 367, 10, R) + down(1172, 482, 10, R) + down(1460, 190, 9, R)
      + poly(J('24,848 38,848 45,770'), B, 3) + dots(J('45,770 95,770'), B) + poly(J('95,770 150,763 165,660'), B, 3) + dots(J('165,660 180,660'), B)
      + dots(J('250,657 350,657'), B) + poly(J('350,657 357,535'), B, 3) + dots(J('357,535 432,535'), B)
      + dots(J('625,622 700,622', '52,622'), B) + poly(J('', '52,622 60,480'), B, 3) + dots(J('', '60,480 112,480'), B)
      + poly(J('', '387,740 397,622'), B, 3) + dots(J('', '397,622 460,622'), B)
      + dots(J('', '515,622 590,620'), B) + poly(J('', '590,620 600,480 628,480 638,330'), B, 3) + dots(J('', '638,330 690,330', '0,330 60,330'), B)
      + up(1067, 496, 11, B) + up(1092, 730, 11, B) + up(148, 752, 11, B) + up(252, 646, 11, B) + up(625, 612, 11, B) + up(1223, 610, 11, B) + up(1571, 415, 11, B)
      + bigUp(92, 715, 85) + bigUp(620, 548, 75) + bigUp(1257, 562, 85) + bigDown(565, 618) + bigDown(985, 605)
      + '<path d="M1588 18h26l-13 14z" fill="#9aa4b4"/>';
  }
});
simple('trade-terminal', 'terminal');
</script>
</body>
</html>
